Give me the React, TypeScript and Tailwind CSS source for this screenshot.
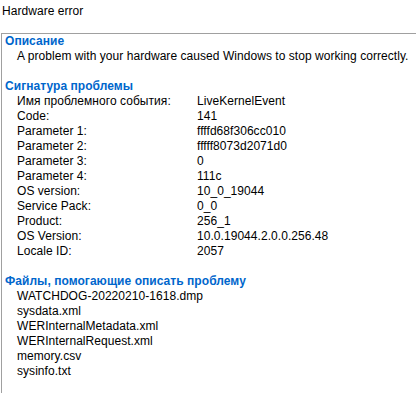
const signature: [string, string][] = [
  ["Имя проблемного события:", "LiveKernelEvent"],
  ["Code:", "141"],
  ["Parameter 1:", "ffffd68f306cc010"],
  ["Parameter 2:", "fffff8073d2071d0"],
  ["Parameter 3:", "0"],
  ["Parameter 4:", "111c"],
  ["OS version:", "10_0_19044"],
  ["Service Pack:", "0_0"],
  ["Product:", "256_1"],
  ["OS Version:", "10.0.19044.2.0.0.256.48"],
  ["Locale ID:", "2057"],
];

const files = [
  "WATCHDOG-20220210-1618.dmp",
  "sysdata.xml",
  "WERInternalMetadata.xml",
  "WERInternalRequest.xml",
  "memory.csv",
  "sysinfo.txt",
];

function Heading({ children }: { children: string }) {
  return <div className="h-[15px] font-bold text-[#0066cc]">{children}</div>;
}

export default function App() {
  return (
    <div
      className="h-[393px] w-[416px] overflow-hidden bg-white text-[12px] leading-[15px] tracking-[0.05px] text-black"
      style={{ fontFamily: '"Segoe UI", "Liberation Sans", Arial, sans-serif' }}
    >
      <div className="h-[33px] pl-[2px] pt-[4px]">Hardware error</div>
      <div className="ml-[1px] h-[400px] w-[440px] border border-[#a0a0a0] pl-[3px]">
        <Heading>Описание</Heading>
        <div className="h-[15px] pl-[12px]">
          A problem with your hardware caused Windows to stop working correctly.
        </div>
        <div className="h-[15px]" />
        <Heading>Сигнатура проблемы</Heading>
        {signature.map(([k, v]) => (
          <div key={k} className="flex h-[15px] pl-[12px]">
            <span className="w-[180px] shrink-0">{k}</span>
            <span>{v}</span>
          </div>
        ))}
        <div className="h-[15px]" />
        <Heading>Файлы, помогающие описать проблему</Heading>
        {files.map((f) => (
          <div key={f} className="h-[15px] pl-[12px]">
            {f}
          </div>
        ))}
      </div>
    </div>
  );
}
